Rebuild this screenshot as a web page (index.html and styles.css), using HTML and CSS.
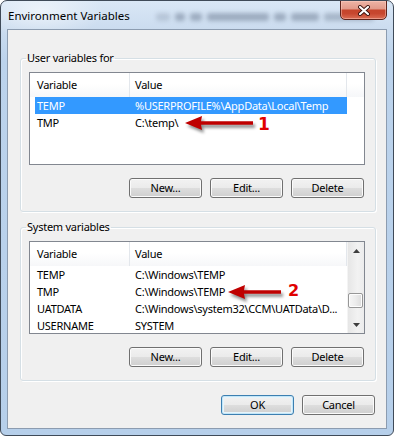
FILE: index.html
```html
<!DOCTYPE html>
<html lang="en">
<head>
<meta charset="utf-8">
<title>Environment Variables</title>
<link rel="stylesheet" href="styles.css">
</head>
<body>
<div class="window">
  <div class="titlebar">
    <span class="title">Environment Variables</span>
    <span class="glass-blur">
      <i class="w w1"></i><i class="w w2"></i><i class="w w3"></i><i class="w w4"></i><i class="w w5"></i><i class="w w6"></i><i class="w w7"></i>
    </span>
    <button class="close" aria-label="Close">
      <svg width="14" height="11" viewBox="0 0 14 11"><path d="M3 2 L11 9 M11 2 L3 9" stroke="#3b1410" stroke-width="4" stroke-linecap="round"/><path d="M3 2 L11 9 M11 2 L3 9" stroke="#ffffff" stroke-width="2.2" stroke-linecap="round"/></svg>
    </button>
  </div>
  <div class="client">
    <fieldset class="group">
      <legend>User variables for</legend>
      <div class="group-body">
        <div class="list">
          <div class="list-main">
            <div class="header">
              <div class="hcol c1">Variable</div>
              <div class="hcol c2">Value</div>
              <div class="hrest"></div>
            </div>
            <div class="row selected"><span class="cell v">TEMP</span><span class="cell val">%USERPROFILE%\AppData\Local\Temp</span></div>
            <div class="row"><span class="cell v">TMP</span><span class="cell val">C:\temp\</span></div>
          </div>
          <svg class="callout callout-1" width="74" height="22" viewBox="0 0 74 22"><polygon points="2,10 19,3 18,8.2 70,8.2 70,11.8 18,11.8 19,17" fill="#bf0000"/></svg>
          <span class="num num-1">1</span>
        </div>
        <div class="buttons">
          <button class="btn">New...</button>
          <button class="btn">Edit...</button>
          <button class="btn">Delete</button>
        </div>
      </div>
    </fieldset>

    <fieldset class="group group-2">
      <legend>System variables</legend>
      <div class="group-body">
        <div class="list">
          <div class="list-main">
            <div class="header">
              <div class="hcol c1">Variable</div>
              <div class="hcol c2">Value</div>
            </div>
            <div class="row"><span class="cell v">TEMP</span><span class="cell val">C:\Windows\TEMP</span></div>
            <div class="row"><span class="cell v">TMP</span><span class="cell val">C:\Windows\TEMP</span></div>
            <div class="row"><span class="cell v">UATDATA</span><span class="cell val">C:\Windows\system32\CCM\UATData\D...</span></div>
            <div class="row"><span class="cell v">USERNAME</span><span class="cell val">SYSTEM</span></div>
          </div>
          <div class="scrollbar">
            <div class="sb-btn"><svg width="7" height="4" viewBox="0 0 7 4"><polygon points="0,4 3.5,0 7,4" fill="#3e3e3e"/></svg></div>
            <div class="sb-track"><div class="sb-thumb"></div></div>
            <div class="sb-btn"><svg width="7" height="4" viewBox="0 0 7 4"><polygon points="0,0 3.5,4 7,0" fill="#3e3e3e"/></svg></div>
          </div>
          <svg class="callout callout-2" width="58" height="22" viewBox="0 0 58 22"><polygon points="2,10 19,3 18,8.2 55,8.2 55,11.8 18,11.8 19,17" fill="#bf0000"/></svg>
          <span class="num num-2">2</span>
        </div>
        <div class="buttons">
          <button class="btn">New...</button>
          <button class="btn">Edit...</button>
          <button class="btn">Delete</button>
        </div>
      </div>
    </fieldset>

    <div class="dialog-buttons">
      <button class="btn default">OK</button>
      <button class="btn">Cancel</button>
    </div>
  </div>
</div>
</body>
</html>
```

FILE: styles.css
```css
* { box-sizing: border-box; }

html, body {
  margin: 0;
  padding: 0;
  background: #ffffff;
}

body {
  width: 394px;
  height: 436px;
  font-family: "Noto Sans", "Liberation Sans", sans-serif;
  font-size: 11px;
  letter-spacing: -0.25px;
  color: #000;
}

.window {
  width: 394px;
  height: 436px;
  border: 1px solid #3f4a58;
  border-radius: 7px 7px 6px 6px;
  overflow: hidden;
  padding: 0 6px 6px 6px;
  display: flex;
  flex-direction: column;
  background:
    radial-gradient(ellipse 90px 40px at 40px 10px, rgba(255,255,255,0.55), rgba(255,255,255,0) 70%),
    linear-gradient(to bottom, #d9e7f6 0px, #cbdcef 28px, #bcd3ec 60px, #b6cfea 100%);
}

.titlebar {
  height: 28px;
  flex: none;
  display: flex;
  align-items: center;
}

.title {
  font-size: 11.5px;
  letter-spacing: 0;
  color: #000;
  white-space: nowrap;
  padding-left: 1px;
}

.glass-blur {
  flex: 1;
  height: 8px;
  margin: 4px -34px 0 26px;
  display: flex;
  gap: 5px;
  filter: blur(2px);
}

.w {
  height: 8px;
  background: rgba(50, 65, 90, 0.32);
  border-radius: 3px;
}

.w1 { width: 14px; opacity: 0.5; }
.w2 { width: 10px; }
.w3 { width: 12px; }
.w4 { width: 62px; }
.w5 { width: 12px; }
.w6 { width: 28px; }
.w7 { flex: 1; opacity: 0.8; }

.close {
  flex: none;
  align-self: flex-start;
  margin-top: -1px;
  width: 47px;
  height: 20px;
  padding: 0;
  border: 1px solid #5e241c;
  border-radius: 0 0 5px 5px;
  background: linear-gradient(to bottom, #eeb4a6 0%, #e29b8b 42%, #c6452c 52%, #c7472f 70%, #db6e55 100%);
  box-shadow: inset 0 0 0 1px rgba(255, 210, 200, 0.45);
  display: flex;
  align-items: center;
  justify-content: center;
  position: relative;
  z-index: 1;
}

.client {
  flex: 1;
  border: 1px solid #8c9cb0;
  background: #f0f0f0;
  padding: 20px 10px 13px 12px;
  display: flex;
  flex-direction: column;
}

.group {
  margin: 0;
  padding: 0;
  min-width: 0;
  border: 1px solid #d5dfe5;
  border-radius: 3px;
  box-shadow: inset 1px 1px 0 #ffffff, 1px 1px 0 #ffffff;
}

.group-2 { margin-top: 7px; }

.group legend {
  margin-left: 5px;
  padding: 0 1px;
  line-height: 16px;
  font-size: 11px;
}

.group-body {
  padding: 6px 10px 13px 8px;
}

.list {
  position: relative;
  width: 336px;
  height: 93px;
  border: 1px solid #828790;
  background: #ffffff;
  display: flex;
  overflow: hidden;
}

.list-main {
  flex: 1;
  min-width: 0;
}

.header {
  height: 24px;
  display: flex;
  background: linear-gradient(to bottom, #ffffff 0%, #ffffff 45%, #f6f7f9 100%);
}

.hcol {
  line-height: 23px;
  white-space: nowrap;
  border-right: 1px solid #e3e7ec;
}

.hcol.c1 { width: 100px; padding-left: 7px; }
.hcol.c2 { width: 217px; padding-left: 5px; }
.hrest { flex: 1; }

.row {
  margin-left: 5px;
  width: 312px;
  height: 17px;
  display: grid;
  grid-template-columns: 95px 217px;
  line-height: 17px;
  white-space: nowrap;
}

.row.selected {
  background: #3399ff;
  color: #ffffff;
}

.cell { overflow: hidden; }
.cell.v { padding-left: 2px; }
.cell.val { padding-left: 5px; }

.scrollbar {
  width: 17px;
  flex: none;
  display: flex;
  flex-direction: column;
  background: linear-gradient(to right, #e6e6e6 0%, #f2f2f2 60%, #ececec 100%);
  border-left: 1px solid #f4f4f4;
}

.sb-btn {
  height: 17px;
  flex: none;
  display: flex;
  align-items: center;
  justify-content: center;
}

.sb-track {
  flex: 1;
  padding-top: 34px;
}

.sb-thumb {
  height: 15px;
  margin: 0 1px 0 0;
  border: 1px solid #979797;
  border-radius: 2px;
  background: linear-gradient(to right, #f6f6f6 0%, #ececec 50%, #dcdcdc 100%);
  box-shadow: inset 0 0 0 1px #fdfdfd;
}

.callout {
  position: absolute;
  filter: drop-shadow(2px 3px 1.5px rgba(0, 0, 0, 0.45));
}

.callout-1 { left: 153px; top: 40px; }
.callout-2 { left: 196px; top: 40px; }

.num {
  position: absolute;
  font-family: "DejaVu Sans", sans-serif;
  font-weight: bold;
  font-size: 17px;
  letter-spacing: 0;
  line-height: 13px;
  color: #e00000;
}

.num-1 { left: 228px; top: 45px; }
.num-2 { left: 258px; top: 42px; font-size: 16px; }

.buttons {
  margin-top: 13px;
  display: flex;
  justify-content: flex-end;
  gap: 8px;
  padding-right: 1px;
}

.btn {
  width: 73px;
  height: 20px;
  padding: 0;
  font-family: "Noto Sans", "Liberation Sans", sans-serif;
  font-size: 11px;
  letter-spacing: -0.25px;
  color: #000;
  border: 1px solid #707070;
  border-radius: 3px;
  background: linear-gradient(to bottom, #f2f2f2 0%, #ebebeb 48%, #dddddd 52%, #cfcfcf 100%);
  box-shadow: inset 0 0 0 1px #fbfbfb;
  line-height: 18px;
}

.btn.default {
  border-color: #3c7fb1;
  box-shadow: inset 0 0 0 1px #c3e6f8, inset 0 0 0 2px #e6f4fb;
}

.dialog-buttons {
  margin-top: 14px;
  display: flex;
  justify-content: flex-end;
  gap: 8px;
  padding-right: 1px;
}
```
